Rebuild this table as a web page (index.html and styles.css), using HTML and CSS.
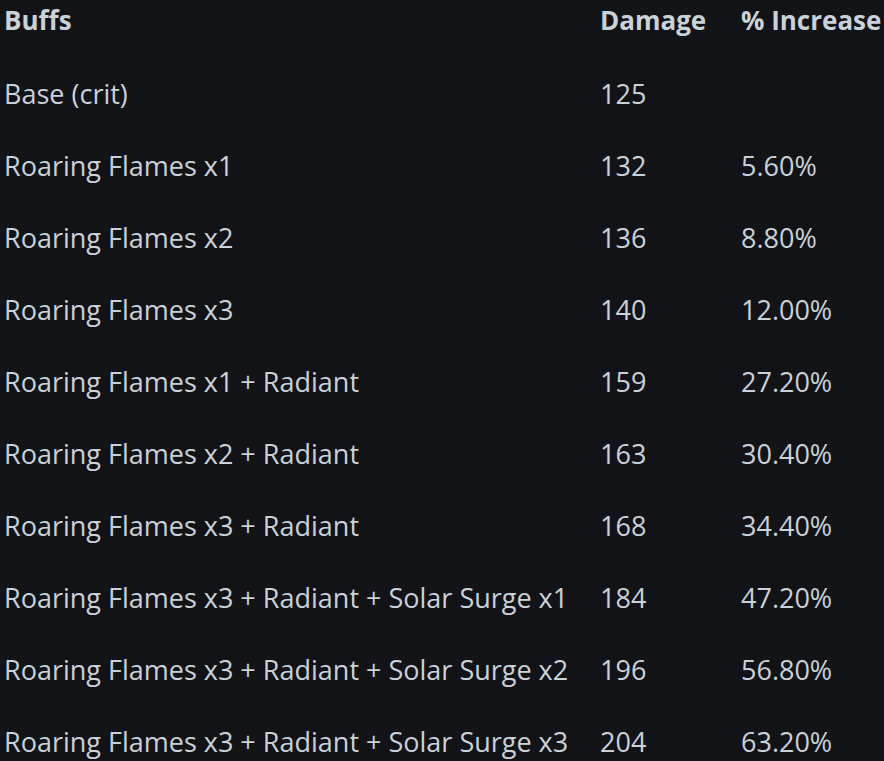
FILE: index.html
```html
<!DOCTYPE html>
<html lang="en">
<head>
  <meta charset="UTF-8" />
  <title>Buffs</title>
  <link rel="stylesheet" href="styles.css">
</head>
<body>
  <table class="buff-table">
    <thead>
      <tr>
        <th class="col-buff">Buffs</th>
        <th class="col-dmg">Damage</th>
        <th class="col-inc">% Increase</th>
      </tr>
    </thead>
    <tbody>
      <tr><td>Base (crit)</td><td>125</td><td></td></tr>
      <tr><td>Roaring Flames x1</td><td>132</td><td>5.60%</td></tr>
      <tr><td>Roaring Flames x2</td><td>136</td><td>8.80%</td></tr>
      <tr><td>Roaring Flames x3</td><td>140</td><td>12.00%</td></tr>
      <tr><td>Roaring Flames x1 + Radiant</td><td>159</td><td>27.20%</td></tr>
      <tr><td>Roaring Flames x2 + Radiant</td><td>163</td><td>30.40%</td></tr>
      <tr><td>Roaring Flames x3 + Radiant</td><td>168</td><td>34.40%</td></tr>
      <tr><td>Roaring Flames x3 + Radiant + Solar Surge x1</td><td>184</td><td>47.20%</td></tr>
      <tr><td>Roaring Flames x3 + Radiant + Solar Surge x2</td><td>196</td><td>56.80%</td></tr>
      <tr><td>Roaring Flames x3 + Radiant + Solar Surge x3</td><td>204</td><td>63.20%</td></tr>
    </tbody>
  </table>
</body>
</html>
```
FILE: styles.css
```css
html, body {
  margin: 0; padding: 0;
  background: #121316;
  font-family: "Open Sans", sans-serif;
  color: #c9d1d9;
}
.buff-table {
  border-collapse: collapse;
  table-layout: fixed;
  margin-left: 4px;
  font-size: 27px;
}
.buff-table th, .buff-table td {
  padding: 0;
  text-align: left;
  white-space: nowrap;
}
.buff-table th {
  height: 58px;
  line-height: 41px;
  vertical-align: top;
  font-size: 26px;
  font-weight: bold;
}
.buff-table td {
  height: 72px;
  line-height: 71px;
  vertical-align: top;
}
.col-buff { width: 596px; }
.col-dmg { width: 141px; }
.col-inc { width: 140px; }
```
